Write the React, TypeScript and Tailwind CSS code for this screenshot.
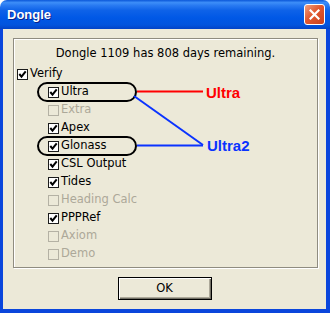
import React from 'react';

interface Option {
  label: string;
  checked: boolean;
  enabled: boolean;
}

const options: Option[] = [
  { label: 'Ultra', checked: true, enabled: true },
  { label: 'Extra', checked: false, enabled: false },
  { label: 'Apex', checked: true, enabled: true },
  { label: 'Glonass', checked: true, enabled: true },
  { label: 'CSL Output', checked: true, enabled: true },
  { label: 'Tides', checked: true, enabled: true },
  { label: 'Heading Calc', checked: false, enabled: false },
  { label: 'PPPRef', checked: true, enabled: true },
  { label: 'Axiom', checked: false, enabled: false },
  { label: 'Demo', checked: false, enabled: false },
];

const CheckBox: React.FC<{ checked: boolean; enabled: boolean }> = ({ checked, enabled }) => (
  <span
    className={`flex w-[11px] h-[11px] shrink-0 items-center justify-center border ${
      enabled ? 'border-[#1c1c1c] bg-white' : 'border-[#b4b1a4] bg-transparent'
    }`}
  >
    {checked && (
      <svg width="9" height="9" viewBox="0 0 9 9">
        <path d="M1.3 4 L3.5 6.6 L7.7 1.4" fill="none" stroke="#000" strokeWidth="2" />
      </svg>
    )}
  </span>
);

const Row: React.FC<Option & { indent?: boolean }> = ({ label, checked, enabled, indent }) => (
  <div className={`flex h-[18px] items-center gap-[2px] ${indent ? 'pl-[34px]' : 'pl-[3px]'}`}>
    <CheckBox checked={checked} enabled={enabled} />
    <span className={enabled ? 'text-black' : 'text-[#aca899]'}>{label}</span>
  </div>
);

export default function App() {
  return (
    <div className="relative w-[330px] h-[313px] flex flex-col bg-white" style={{ fontFamily: '"DejaVu Sans", sans-serif' }}>
      {/* Title bar */}
      <div className="flex h-[29px] items-center justify-between rounded-t-[7px] pl-[7px] pr-[5px] bg-[linear-gradient(180deg,#0b57d9_0%,#3d8ef8_9%,#2a7bf2_18%,#0e62e8_36%,#0058e6_62%,#0254dd_86%,#0343c6_100%)]">
        <span
          className="text-[13px] font-bold text-white [text-shadow:1px_1px_0_#0a2188]"
          style={{ fontFamily: '"Liberation Sans", Arial, sans-serif' }}
        >
          Dongle
        </span>
        <div className="flex w-[21px] h-[21px] items-center justify-center rounded-[3px] border border-white bg-[linear-gradient(135deg,#f0a080_0%,#e2582f_45%,#c9401c_100%)]">
          <svg width="11" height="11" viewBox="0 0 11 11">
            <path d="M1.5 1.5 L9.5 9.5 M9.5 1.5 L1.5 9.5" stroke="#fff" strokeWidth="2.2" strokeLinecap="square" />
          </svg>
        </div>
      </div>

      {/* Body */}
      <div className="flex flex-1 flex-col border-l-[3px] border-r-4 border-b-4 border-[#0a46dc] bg-[#ece9d8] text-[11.5px]">
        <div className="ml-[10px] mt-[9px] w-[305px] h-[230px] border border-[#8f8c80] shadow-[inset_1px_1px_0_#fff,1px_1px_0_#fff] pt-[6px]">
          <div className="flex h-[18px] items-center justify-center text-black">
            Dongle 1109 has 808 days remaining.
          </div>
          <div className="mt-[2px]">
            <Row label="Verify" checked enabled />
            {options.map((o) => (
              <Row key={o.label} {...o} indent />
            ))}
          </div>
        </div>

        <div className="flex justify-center mt-[9px]">
          <button className="w-[94px] h-[23px] border border-black bg-[#ece9d8] text-black shadow-[inset_1px_1px_0_#fff,inset_-1px_-1px_0_#716f64,inset_-2px_-2px_0_#aca899]">
            OK
          </button>
        </div>
      </div>

      {/* Annotations */}
      <svg className="pointer-events-none absolute inset-0" width="330" height="313" viewBox="0 0 330 313">
        <rect x="38" y="83" width="98" height="18" rx="9" fill="none" stroke="#000" strokeWidth="2" />
        <rect x="38" y="137" width="98" height="18" rx="9" fill="none" stroke="#000" strokeWidth="2" />
        <line x1="137" y1="91.5" x2="203" y2="91.5" stroke="#ff0000" strokeWidth="2" />
        <line x1="134" y1="96" x2="203" y2="145" stroke="#0a33ff" strokeWidth="2" />
        <line x1="137" y1="145.5" x2="203" y2="145.5" stroke="#0a33ff" strokeWidth="2" />
      </svg>
      <span
        className="pointer-events-none absolute left-[206px] top-[85px] text-[15px] leading-[15px] font-bold text-[#ff0000]"
        style={{ fontFamily: '"Liberation Sans", Arial, sans-serif' }}
      >
        Ultra
      </span>
      <span
        className="pointer-events-none absolute left-[207px] top-[138px] text-[15px] leading-[15px] font-bold text-[#0a33ff]"
        style={{ fontFamily: '"Liberation Sans", Arial, sans-serif' }}
      >
        Ultra2
      </span>
    </div>
  );
}
